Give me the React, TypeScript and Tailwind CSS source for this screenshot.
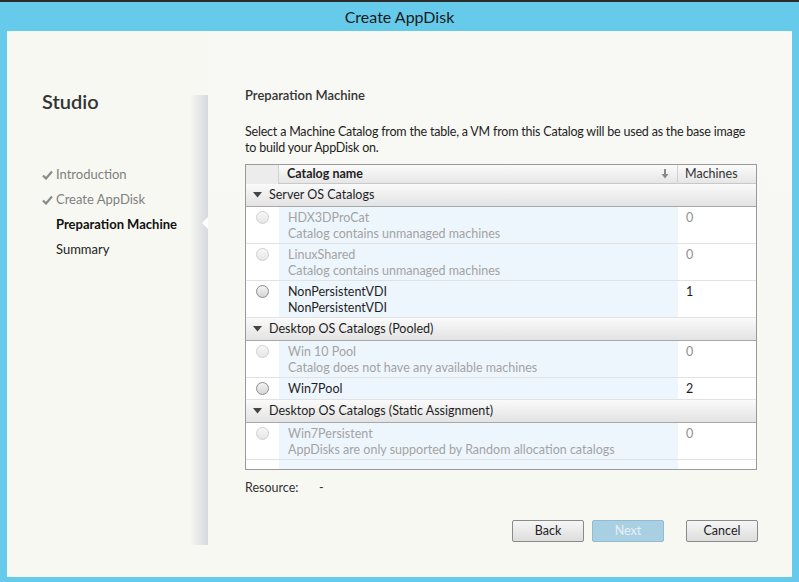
import React from "react";

type Row =
  | { kind: "group"; label: string }
  | { kind: "item"; name: string; sub?: string; count: string; enabled: boolean };

const rows: Row[] = [
  { kind: "group", label: "Server OS Catalogs" },
  { kind: "item", name: "HDX3DProCat", sub: "Catalog contains unmanaged machines", count: "0", enabled: false },
  { kind: "item", name: "LinuxShared", sub: "Catalog contains unmanaged machines", count: "0", enabled: false },
  { kind: "item", name: "NonPersistentVDI", sub: "NonPersistentVDI", count: "1", enabled: true },
  { kind: "group", label: "Desktop OS Catalogs (Pooled)" },
  { kind: "item", name: "Win 10 Pool", sub: "Catalog does not have any available machines", count: "0", enabled: false },
  { kind: "item", name: "Win7Pool", count: "2", enabled: true },
  { kind: "group", label: "Desktop OS Catalogs (Static Assignment)" },
  { kind: "item", name: "Win7Persistent", sub: "AppDisks are only supported by Random allocation catalogs", count: "0", enabled: false },
];

const steps = [
  { label: "Introduction", done: true },
  { label: "Create AppDisk", done: true },
  { label: "Preparation Machine", current: true },
  { label: "Summary" },
];

function Check() {
  return (
    <svg width="11" height="10" viewBox="0 0 11 10" className="shrink-0">
      <path d="M1 5.5 L4 8.5 L10 1.5" fill="none" stroke="#8a8a8a" strokeWidth="2.2" />
    </svg>
  );
}

function Radio({ enabled }: { enabled: boolean }) {
  return (
    <div
      className={
        enabled
          ? "w-[13px] h-[13px] rounded-full border border-[#8c8c8c] bg-gradient-to-b from-[#f4f4f4] to-[#d6d6d6]"
          : "w-[13px] h-[13px] rounded-full border border-[#cfcfcf] bg-gradient-to-b from-[#f7f7f7] to-[#e6e6e6]"
      }
    />
  );
}

export default function App() {
  return (
    <div className="w-[799px] h-[582px] bg-[#66cbea] flex flex-col overflow-hidden text-[13px] text-[#1e1e1e] font-['Lato',sans-serif]">
      <div className="h-[31px] border-t-2 border-[#2b2b2b] flex items-center justify-center text-[16px] text-[#1a1a1a]">
        Create AppDisk
      </div>
      <div className="mx-[7px] h-[546px] bg-[#f7f8f2] flex">
        {/* sidebar */}
        <div className="w-[183px] pl-[35px] pt-[57px] whitespace-nowrap">
          <div className="text-[20px] leading-[26px] font-semibold text-[#333]">Studio</div>
          <div className="mt-[48px] flex flex-col">
            {steps.map((s) => (
              <div key={s.label} className="h-[25px] flex items-center">
                <div className="w-[14px]">{s.done && <Check />}</div>
                <span
                  className={
                    s.current
                      ? "font-bold text-[#111]"
                      : s.done
                        ? "text-[#808080]"
                        : "text-[#222]"
                  }
                >
                  {s.label}
                </span>
              </div>
            ))}
          </div>
        </div>
        {/* shadow edge */}
        <div className="relative w-[18px] mt-[64px] mb-[32px] bg-gradient-to-r from-[#f7f8f2] to-[#d5d8de]">
          <div className="absolute right-0 top-[122px] w-0 h-0 border-y-[6px] border-y-transparent border-r-[6px] border-r-white" />
        </div>
        {/* panel */}
        <div className="flex-1 pl-[37px] pr-[34px] pt-[56px] flex flex-col bg-gradient-to-b from-[#f8f9f4] to-[#f7f8f2]">
          <div className="font-semibold leading-[16px] text-[#333]">Preparation Machine</div>
          <div className="mt-[21px] leading-[16px] text-[12.5px] tracking-[-0.2px] text-[#1e1e1e]">
            Select a Machine Catalog from the table, a VM from this Catalog will be used as the base image to build your AppDisk on.
          </div>
          <div className="mt-[8px] w-[512px] h-[306px] border border-[#9a9a9a] bg-white flex flex-col text-[12.5px]">
            <div className="h-[19px] grid grid-cols-[33px_399px_1fr] border-b border-[#c8c8c8] bg-gradient-to-b from-[#fbfbfb] to-[#e6e6e6]">
              <div className="border-r border-[#d0d0d0] bg-[#ececec]" />
              <div className="border-r border-[#d0d0d0] flex items-center pl-[8px] pr-[8px]">
                <span className="font-bold flex-1">Catalog name</span>
                <svg width="8" height="10" viewBox="0 0 8 10">
                  <path d="M3 0 H5 V5 H7.5 L4 9.5 L0.5 5 H3 Z" fill="#8a8a8a" />
                </svg>
              </div>
              <div className="flex items-center pl-[7px] text-[#333]">Machines</div>
            </div>
            {rows.map((r, i) =>
              r.kind === "group" ? (
                <div
                  key={i}
                  className="h-[23px] flex items-center pl-[7px] border-b border-[#a8a8a8] bg-gradient-to-b from-[#fafafa] to-[#e3e3e3]"
                >
                  <svg width="9" height="6" viewBox="0 0 9 6" className="mr-[7px]">
                    <path d="M0 0 H9 L4.5 5.5 Z" fill="#444" />
                  </svg>
                  <span className="text-[#1e1e1e]">{r.label}</span>
                </div>
              ) : (
                <div
                  key={i}
                  className={
                    (r.sub ? "h-[37px] " : "h-[22px] ") +
                    "grid grid-cols-[33px_399px_1fr] border-b border-[#e2e2e2] leading-[16px]"
                  }
                >
                  <div className="pl-[10px] pt-[4px]">
                    <Radio enabled={r.enabled} />
                  </div>
                  <div className={"bg-[#eef6fd] pl-[9px] pt-[3px] " + (r.enabled ? "text-[#1e1e1e]" : "text-[#a3a3a3]")}>
                    <div>{r.name}</div>
                    {r.sub && <div>{r.sub}</div>}
                  </div>
                  <div className={"pl-[8px] pt-[3px] " + (r.enabled ? "text-[#1e1e1e]" : "text-[#909090]")}>{r.count}</div>
                </div>
              )
            )}
            <div className="flex-1 grid grid-cols-[33px_399px_1fr]">
              <div />
              <div className="bg-[#eef6fd]" />
              <div />
            </div>
          </div>
          <div className="mt-[10px] flex leading-[16px] text-[12.5px] text-[#333]">
            <span className="w-[74px]">Resource:</span>
            <span>-</span>
          </div>
          <div className="mt-[24px] flex justify-end text-[12.5px]">
            <button className="w-[72px] h-[22px] rounded-[2px] border border-[#8a8a8a] bg-gradient-to-b from-[#f6f6f6] to-[#dddddd] text-[#222]">
              Back
            </button>
            <button className="ml-[8px] w-[72px] h-[22px] rounded-[2px] border border-[#93bbd1] bg-[#a9cfe3] text-[#e6f1f7]">
              Next
            </button>
            <button className="ml-[22px] w-[72px] h-[22px] rounded-[2px] border border-[#8a8a8a] bg-gradient-to-b from-[#f6f6f6] to-[#dddddd] text-[#222]">
              Cancel
            </button>
          </div>
        </div>
      </div>
    </div>
  );
}
